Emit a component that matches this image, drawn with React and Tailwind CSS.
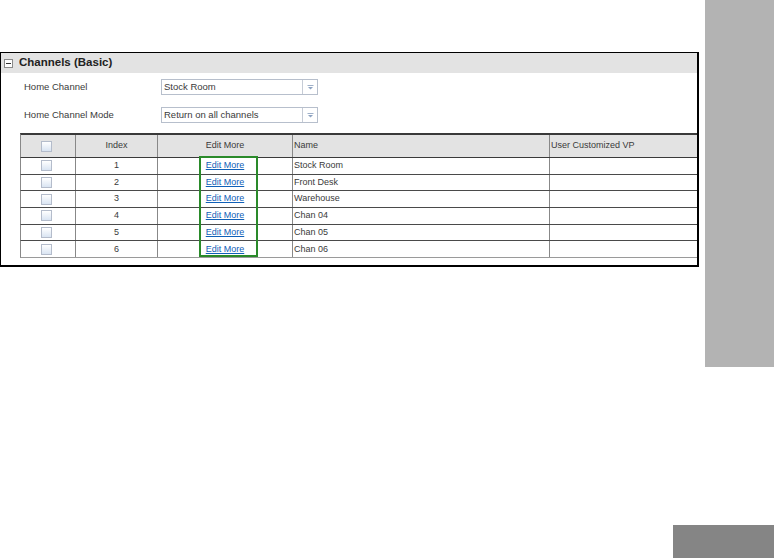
import React from "react";

const rows = [
  ["1", "Stock Room"],
  ["2", "Front Desk"],
  ["3", "Warehouse"],
  ["4", "Chan 04"],
  ["5", "Chan 05"],
  ["6", "Chan 06"],
];

function Check() {
  return (
    <div className="w-[11px] h-[11px] border border-[#b4bccb] bg-gradient-to-b from-[#ffffff] to-[#d9e4f2]" />
  );
}

function Select({ value }) {
  return (
    <div className="flex w-[157px] h-[16px] border border-[#b7bfcc] bg-white">
      <div className="flex-1 flex items-center pl-[2px] text-[9.5px] text-[#3a3a3a]">{value}</div>
      <div className="w-[15px] border-l border-[#c6ccd6] flex items-center justify-center">
        <svg width="7" height="5" viewBox="0 0 7 5">
          <rect x="0.5" y="0" width="6" height="1" fill="#9fb0c8" />
          <path d="M1 2 L6 2 L3.5 4.5 Z" fill="#8ea3c2" />
        </svg>
      </div>
    </div>
  );
}

export default function App() {
  return (
    <div className="w-[774px] h-[558px] bg-white flex flex-col overflow-hidden" style={{ fontFamily: '"Liberation Sans", Arial, sans-serif' }}>
      <div className="flex h-[367px] shrink-0">
        <div className="flex-1 pt-[52px]">
          <div className="w-[699px] h-[215px] border-l border-t border-r-2 border-b-2 border-black flex flex-col">
            <div className="h-[20px] bg-[#e3e3e3] flex items-center gap-[6px] pl-[3px]">
              <div className="w-[9px] h-[9px] border border-[#8a8a8a] bg-white flex items-center justify-center">
                <div className="w-[5px] h-[1px] bg-[#333]" />
              </div>
              <span className="text-[11.5px] font-bold text-[#222]">Channels (Basic)</span>
            </div>
            <div className="flex items-center h-[16px] mt-[6px] pl-[23px]">
              <div className="w-[137px] text-[9.5px] text-[#3a3a3a]">Home Channel</div>
              <Select value="Stock Room" />
            </div>
            <div className="flex items-center h-[16px] mt-[12px] pl-[23px]">
              <div className="w-[137px] text-[9.5px] text-[#3a3a3a]">Home Channel Mode</div>
              <Select value="Return on all channels" />
            </div>
            <div className="relative ml-[19px] mt-[10px] text-[9px] text-[#3a3a3a]">
              <div className="grid grid-cols-[55px_82px_135px_257px_1fr] h-[25px] bg-[#e3e3e3] border-t-2 border-b border-[#3a3a3a] border-l border-l-[#888]">
                <div className="border-r border-[#888] flex items-center justify-center pr-[4px]"><Check /></div>
                <div className="border-r border-[#888] flex items-center justify-center">Index</div>
                <div className="border-r border-[#888] flex items-center justify-center">Edit More</div>
                <div className="border-r border-[#888] flex items-center pl-[1px]">Name</div>
                <div className="flex items-center pl-[1px]">User Customized VP</div>
              </div>
              {rows.map(([i, n], idx) => (
                <div
                  key={i}
                  className={`grid grid-cols-[55px_82px_135px_257px_1fr] h-[16.7px] border-b border-l border-l-[#888] ${idx === rows.length - 1 ? "border-b-[#9a9a9a]" : "border-b-[#4a4a4a]"}`}
                >
                  <div className="border-r border-[#888] flex items-center justify-center pr-[4px]"><Check /></div>
                  <div className="border-r border-[#888] flex items-center justify-center">{i}</div>
                  <div className="border-r border-[#888] flex items-center justify-center">
                    <a className="text-[#1060b8] underline">Edit More</a>
                  </div>
                  <div className="border-r border-[#888] flex items-center pl-[1px]">{n}</div>
                  <div />
                </div>
              ))}
              <div className="absolute left-[179px] top-[23px] w-[59px] h-[101px] border-2 border-[#2a8a2a] pointer-events-none" />
            </div>
          </div>
        </div>
        <div className="w-[69px] bg-[#b3b3b3]" />
      </div>
      <div className="flex justify-end mt-[158px]">
        <div className="w-[101px] h-[33px] bg-[#858585]" />
      </div>
    </div>
  );
}
